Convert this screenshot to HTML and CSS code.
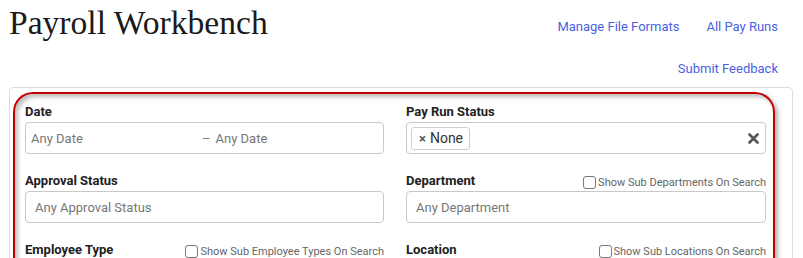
FILE: index.html
```html
<!DOCTYPE html>
<html lang="en">
<head>
  <meta charset="UTF-8" />
  <meta name="viewport" content="width=device-width, initial-scale=1.0" />
  <title>Payroll Workbench</title>
  <link rel="stylesheet" href="styles.css">
</head>
<body>
  <div class="page">
    <header class="topbar">
      <h1>Payroll Workbench</h1>
      <nav class="links">
        <div class="links-row">
          <a href="#">Manage File Formats</a>
          <a href="#">All Pay Runs</a>
        </div>
        <div class="links-row">
          <a href="#">Submit Feedback</a>
        </div>
      </nav>
    </header>

    <div class="panel">
      <div class="filters">
        <div class="field">
          <div class="field-head">
            <label>Date</label>
          </div>
          <div class="input date-range">
            <span class="date-from">Any Date</span>
            <span class="dash">–</span>
            <span>Any Date</span>
          </div>
        </div>

        <div class="field">
          <div class="field-head">
            <label>Pay Run Status</label>
          </div>
          <div class="input select-multi">
            <span class="tag"><span class="tag-x">×</span>None</span>
            <svg class="clear" width="11" height="11" viewBox="0 0 11 11">
              <path d="M1.5 1.5 L9.5 9.5 M9.5 1.5 L1.5 9.5" stroke="#555" stroke-width="2.6" stroke-linecap="round" />
            </svg>
          </div>
        </div>

        <div class="field">
          <div class="field-head">
            <label>Approval Status</label>
          </div>
          <div class="input padded">Any Approval Status</div>
        </div>

        <div class="field">
          <div class="field-head">
            <label>Department</label>
            <span class="check"><span class="box"></span>Show Sub Departments On Search</span>
          </div>
          <div class="input padded">Any Department</div>
        </div>

        <div class="field">
          <div class="field-head">
            <label>Employee Type</label>
            <span class="check"><span class="box"></span>Show Sub Employee Types On Search</span>
          </div>
          <div class="input padded">Any Employee Type</div>
        </div>

        <div class="field">
          <div class="field-head">
            <label>Location</label>
            <span class="check"><span class="box"></span>Show Sub Locations On Search</span>
          </div>
          <div class="input padded">Any Location</div>
        </div>
      </div>
    </div>
  </div>
</body>
</html>
```

FILE: styles.css
```css
body {
  margin: 0;
  font-family: Roboto, 'Liberation Sans', sans-serif;
  color: #222;
  background: #fff;
}

.page {
  padding: 0 10px 0 9px;
}

.topbar {
  display: flex;
  justify-content: space-between;
  align-items: flex-start;
}

h1 {
  font-family: 'Liberation Serif', serif;
  font-weight: normal;
  font-size: 33.6px;
  line-height: 40px;
  margin: 3px 0 0 0;
  color: #1a1a1a;
}

.links {
  display: flex;
  flex-direction: column;
  align-items: flex-end;
  padding: 18px 15px 0 0;
}

.links-row {
  display: flex;
  gap: 27px;
  line-height: 18px;
}

.links-row + .links-row {
  margin-top: 24px;
}

.links a {
  color: #4a5fe3;
  text-decoration: none;
  font-size: 13px;
}

.panel {
  margin-top: 9px;
  border: 1px solid #dcdcdc;
  border-bottom: none;
  border-radius: 5px 5px 0 0;
  padding: 4px 17px 0 3px;
  height: 200px;
}

.filters {
  border: 2px solid #c40000;
  border-bottom: none;
  border-radius: 20px 20px 0 0;
  box-shadow: 3px 3px 4px rgba(0, 0, 0, 0.3), inset 3px 3px 4px rgba(0, 0, 0, 0.25);
  padding: 7px 7px 0 10px;
  height: 200px;
  display: grid;
  grid-template-columns: 359px 360px;
  column-gap: 22px;
  row-gap: 16px;
  align-content: start;
}

.field-head {
  display: flex;
  justify-content: space-between;
  align-items: center;
  height: 20px;
  margin-bottom: 1px;
}

.field-head label {
  font-weight: bold;
  font-size: 13px;
  color: #222;
}

.check {
  display: flex;
  align-items: center;
  font-size: 11px;
  color: #666;
  padding-top: 4px;
}

.check .box {
  width: 11px;
  height: 11px;
  border: 1px solid #777;
  border-radius: 3px;
  margin-right: 2px;
}

.input {
  box-sizing: border-box;
  height: 32px;
  border: 1px solid #c8c8c8;
  border-radius: 4px;
  display: flex;
  align-items: center;
  font-size: 13px;
  color: #777;
}

.padded {
  padding-left: 9px;
}

.date-range {
  padding-left: 5px;
}

.date-from {
  width: 171px;
}

.dash {
  margin-right: 5px;
}

.select-multi {
  padding: 0 5px 0 4px;
  justify-content: space-between;
}

.tag {
  display: flex;
  align-items: center;
  height: 21px;
  border: 1px solid #cfcfcf;
  border-radius: 3px;
  padding: 0 6px 0 7px;
  font-size: 14px;
  color: #333;
}

.tag-x {
  font-weight: bold;
  color: #555;
  margin-right: 4px;
  font-size: 13px;
}

.clear {
  margin-right: 1px;
}
```
